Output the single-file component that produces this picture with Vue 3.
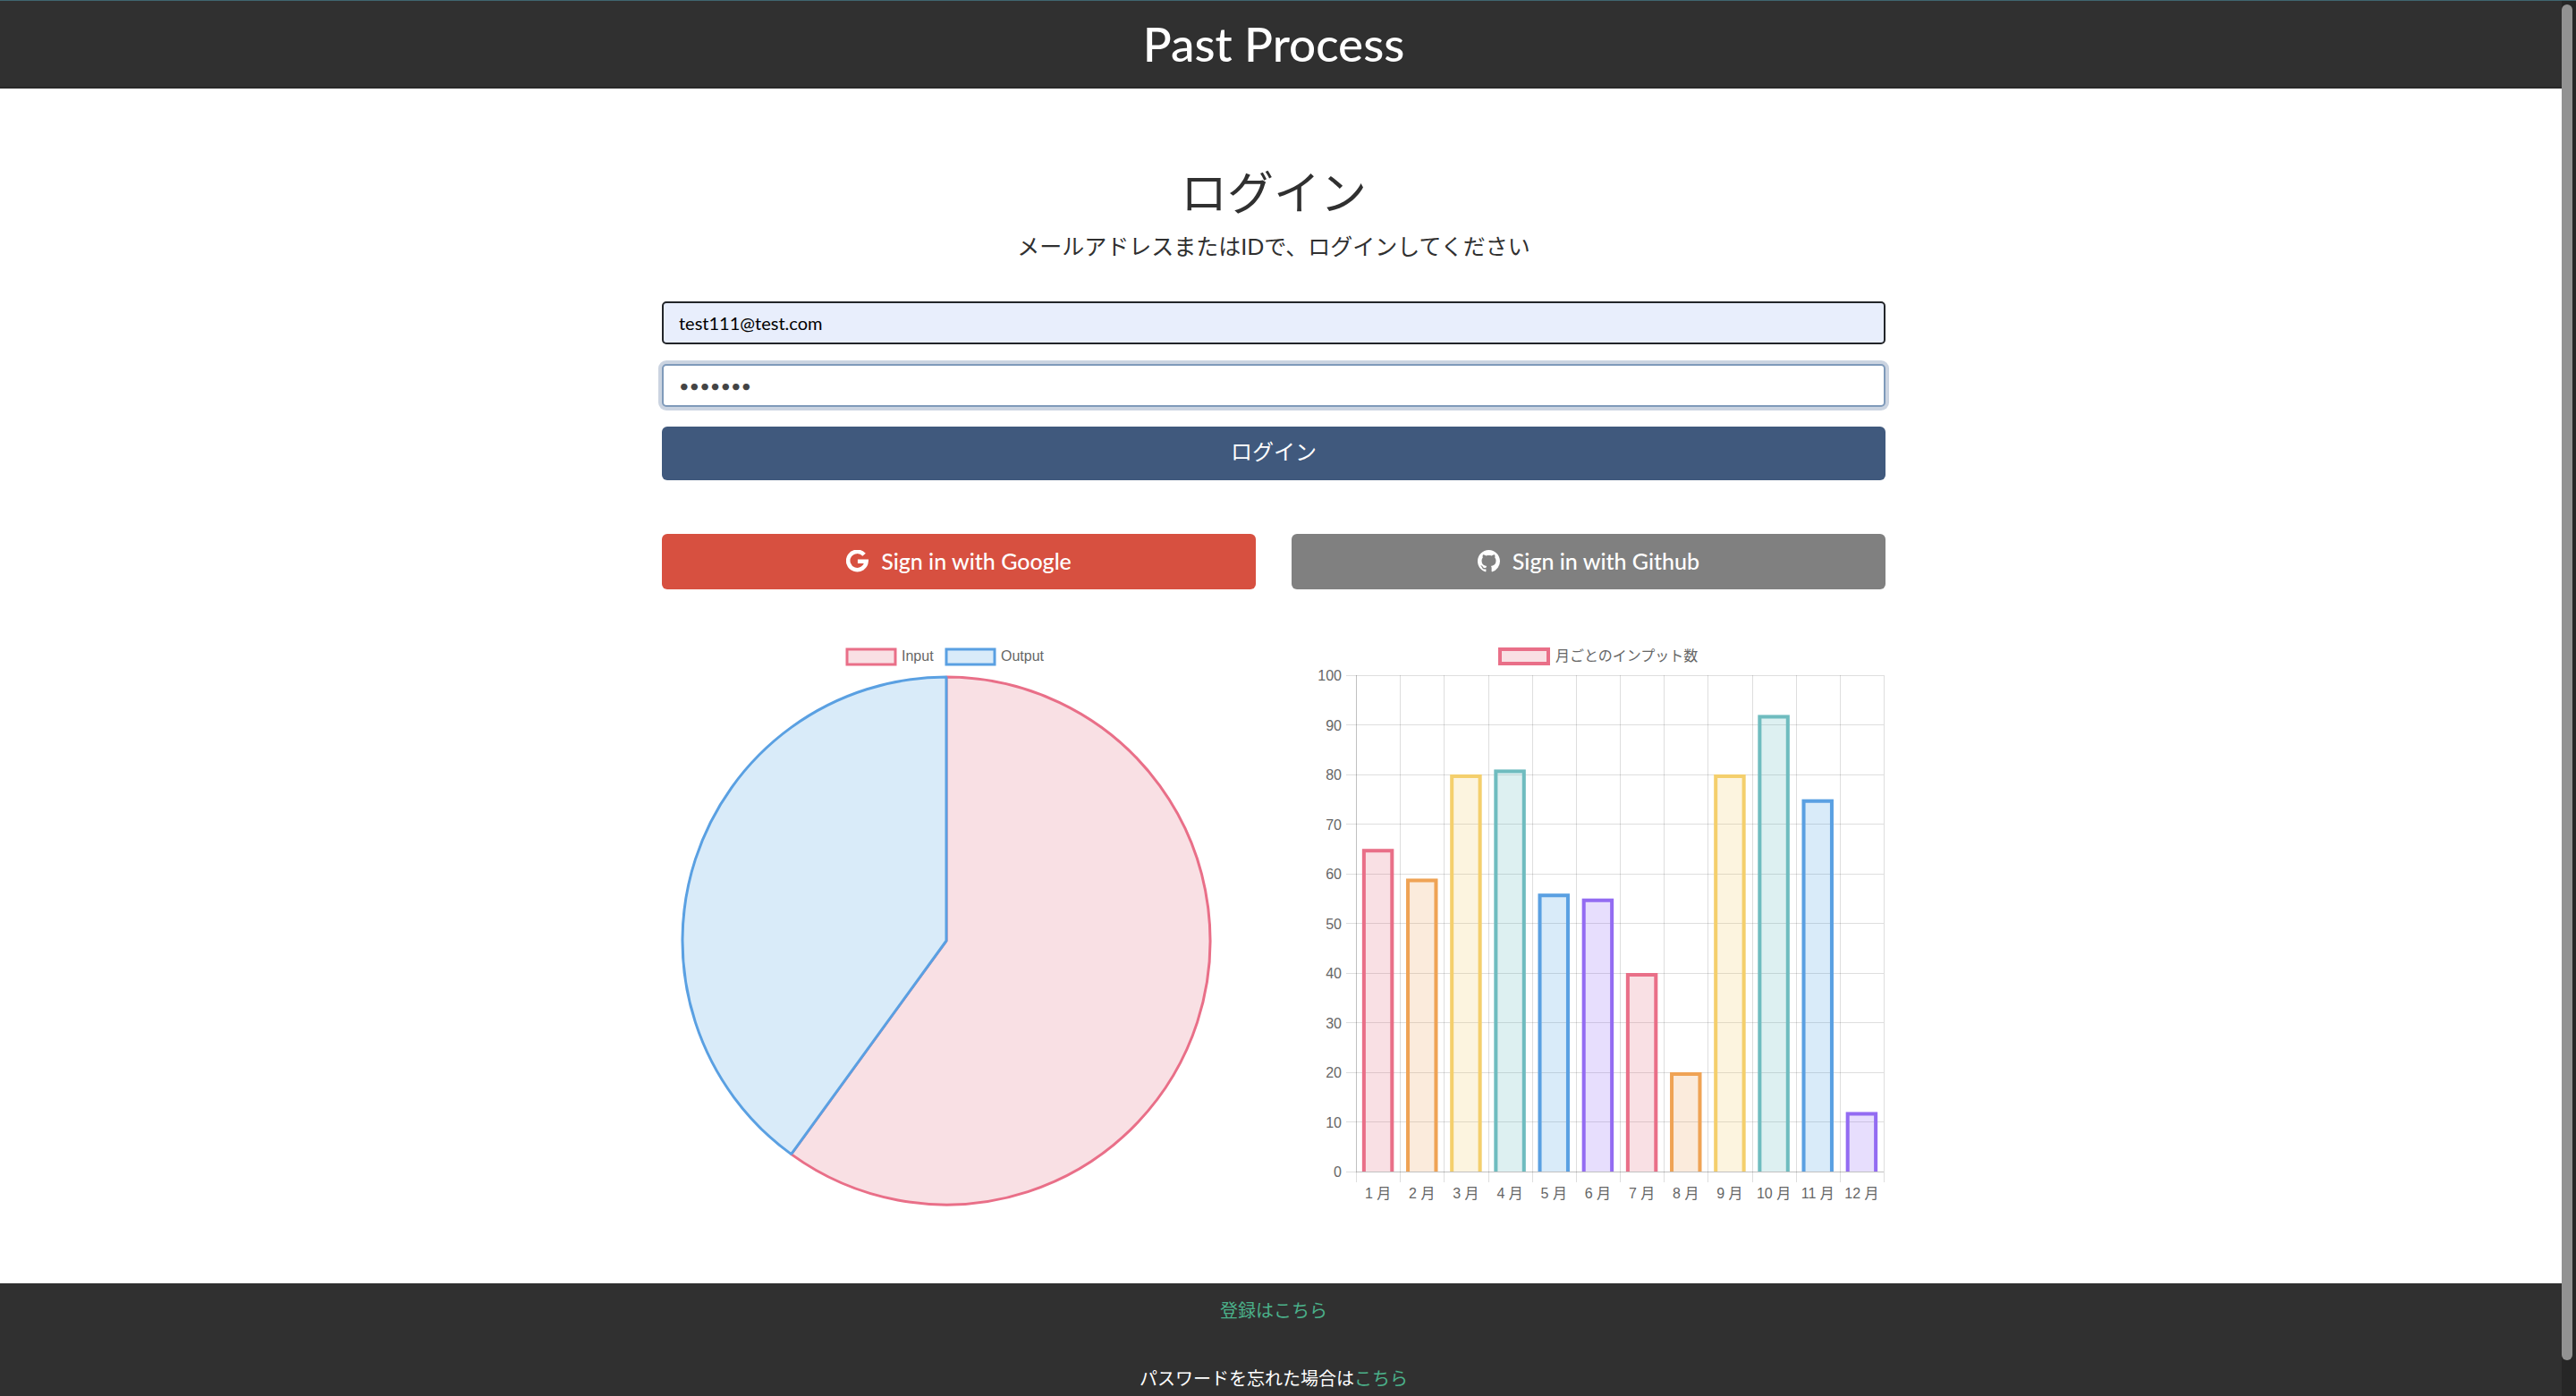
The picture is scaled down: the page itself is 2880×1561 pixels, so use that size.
<script setup>
import { ref } from 'vue'

const email = ref('test111@test.com')
const password = ref('pass111')

const palette = {
  red: '225, 100, 120',
  orange: '235, 155, 80',
  yellow: '240, 200, 95',
  teal: '85, 180, 185',
  blue: '65, 155, 225',
  purple: '135, 90, 245',
}
const strokes = {
  red: '#e96f88',
  orange: '#efa355',
  yellow: '#f4cf6c',
  teal: '#6fbcbf',
  blue: '#5aa0e2',
  purple: '#936cf2',
}
const fillOf = (name) => `rgba(${palette[name]}, 0.2)`

const monthly = [65, 59, 80, 81, 56, 55, 40, 20, 80, 92, 75, 12]
const order = ['red', 'orange', 'yellow', 'teal', 'blue', 'purple']

const plot = { left: 44, right: 634, top: 40, bottom: 595 }
const step = (plot.right - plot.left) / 12
const barWidth = step * 0.72
const yOf = (v) => plot.bottom - (v * (plot.bottom - plot.top)) / 100

const ticks = Array.from({ length: 11 }, (_, i) => ({ value: i * 10, y: yOf(i * 10) }))
const columns = Array.from({ length: 13 }, (_, i) => Math.round(plot.left + i * step))

const bars = monthly.map((value, i) => {
  const color = order[i % 6]
  const center = plot.left + step * (i + 0.5)
  const x0 = center - barWidth / 2
  const x1 = center + barWidth / 2
  const y = yOf(value)
  return {
    label: `${i + 1} 月`,
    center,
    x: x0,
    y,
    height: plot.bottom - y,
    fill: fillOf(color),
    stroke: strokes[color],
    outline: `M${x0 + 2} ${plot.bottom} V${y + 2} H${x1 - 2} V${plot.bottom}`,
  }
})

const pie = { cx: 318, cy: 337, r: 295 }
const angle = Math.PI * 2 * 0.6
const px = pie.cx + pie.r * Math.sin(angle)
const py = pie.cy - pie.r * Math.cos(angle)
const top = pie.cy - pie.r
const inputSlice = `M${pie.cx} ${pie.cy} V${top} A${pie.r} ${pie.r} 0 1 1 ${px} ${py} Z`
const outputSlice = `M${pie.cx} ${pie.cy} L${px} ${py} A${pie.r} ${pie.r} 0 0 1 ${pie.cx} ${top} Z`
</script>

<template>
  <div class="page">
    <div class="column">
      <header class="header">
        <h1 class="brand">Past Process</h1>
      </header>

      <main class="main">
        <div class="content">
          <h2 class="title">ログイン</h2>
          <p class="lead">メールアドレスまたはIDで、ログインしてください</p>

          <form class="form" @submit.prevent>
            <input v-model="email" class="field filled" type="email" aria-label="メールアドレス" />
            <input v-model="password" class="field focused" type="password" aria-label="パスワード" />
            <button class="btn login" type="submit">ログイン</button>
          </form>

          <div class="social">
            <button class="btn google" type="button">
              <svg class="icon" viewBox="0 0 24 24" aria-hidden="true">
                <path
                  fill="none"
                  stroke="currentColor"
                  stroke-width="4.4"
                  d="M19.3 5.1A9.8 9.8 0 1 0 21.7 12.2H12.4"
                />
              </svg>
              <span>Sign in with Google</span>
            </button>
            <button class="btn github" type="button">
              <svg class="icon" viewBox="0 0 16 16" aria-hidden="true">
                <path
                  fill="currentColor"
                  d="M8 0C3.58 0 0 3.58 0 8c0 3.54 2.29 6.53 5.47 7.59.4.07.55-.17.55-.38 0-.19-.01-.82-.01-1.49-2.01.37-2.53-.49-2.69-.94-.09-.23-.48-.94-.82-1.13-.28-.15-.68-.52-.01-.53.63-.01 1.08.58 1.23.82.72 1.21 1.87.87 2.33.66.07-.52.28-.87.51-1.07-1.78-.2-3.64-.89-3.64-3.95 0-.87.31-1.59.82-2.15-.08-.2-.36-1.02.08-2.12 0 0 .67-.21 2.2.82.64-.18 1.32-.27 2-.27s1.36.09 2 .27c1.53-1.04 2.2-.82 2.2-.82.44 1.1.16 1.92.08 2.12.51.56.82 1.27.82 2.15 0 3.07-1.87 3.75-3.65 3.95.29.25.54.73.54 1.48 0 1.07-.01 1.93-.01 2.2 0 .21.15.46.55.38A8.01 8.01 0 0 0 16 8c0-4.42-3.58-8-8-8z"
                />
              </svg>
              <span>Sign in with Github</span>
            </button>
          </div>

          <div class="charts">
            <svg class="chart" viewBox="0 0 636 636" role="img" aria-label="Input / Output">
              <rect x="207" y="11" width="54" height="17" :fill="fillOf('red')" :stroke="strokes.red" stroke-width="3" />
              <text x="268" y="24">Input</text>
              <rect x="318" y="11" width="54" height="17" :fill="fillOf('blue')" :stroke="strokes.blue" stroke-width="3" />
              <text x="379" y="24">Output</text>
              <g stroke-width="3" stroke-linejoin="bevel">
                <path :d="inputSlice" :fill="fillOf('red')" :stroke="strokes.red" />
                <path :d="outputSlice" fill="#d9ebf9" :stroke="strokes.blue" />
              </g>
            </svg>

            <svg class="chart" viewBox="0 0 636 636" role="img" aria-label="月ごとのインプット数">
              <rect x="205" y="11" width="54" height="16" :fill="fillOf('red')" :stroke="strokes.red" stroke-width="4" />
              <text x="267" y="24">月ごとのインプット数</text>
              <g class="grid">
                <line v-for="t in ticks" :key="t.value" x1="33" :x2="plot.right" :y1="t.y" :y2="t.y" />
                <line v-for="x in columns" :key="x" :x1="x" :x2="x" :y1="plot.top" y2="607" />
              </g>
              <g class="grid">
                <line :x1="plot.left" :x2="plot.left" :y1="plot.top" :y2="plot.bottom" />
                <line :x1="plot.left" :x2="plot.right" :y1="plot.bottom" :y2="plot.bottom" />
              </g>
              <g v-for="b in bars" :key="b.label">
                <rect :x="b.x" :y="b.y" :width="barWidth" :height="b.height" :fill="b.fill" />
                <path :d="b.outline" fill="none" :stroke="b.stroke" stroke-width="4" />
                <text :x="b.center" y="625" text-anchor="middle">{{ b.label }}</text>
              </g>
              <text v-for="t in ticks" :key="t.value" x="28" :y="t.y + 6" text-anchor="end">{{ t.value }}</text>
            </svg>
          </div>
        </div>
      </main>

      <footer class="footer">
        <p><a href="#register">登録はこちら</a></p>
        <p>パスワードを忘れた場合は<a href="#reset">こちら</a></p>
      </footer>
    </div>
    <div class="scroll-track"><div class="scroll-thumb"></div></div>
  </div>
</template>

<style>
body {
  margin: 0;
  background: #fff;
}
</style>

<style scoped>
* {
  box-sizing: border-box;
}
.page {
  display: flex;
  min-height: 100vh;
  border-top: 1px solid #3f6670;
  font-family: Lato, 'Noto Sans CJK JP', sans-serif;
  font-size: 20px;
  line-height: 30px;
  color: #303030;
}
.column {
  flex: 1;
  min-width: 0;
  display: flex;
  flex-direction: column;
}
.header {
  padding: 16px 16px 16px 0;
  border-bottom: 2px solid #292929;
  background: #303030;
  color: #fff;
  text-align: center;
}
.brand,
.title {
  margin: 0;
  line-height: 64px;
}
.brand {
  font-size: 53px;
  font-weight: 500;
}
.title {
  font-size: 52px;
  font-weight: 400;
}
.main {
  flex: 1;
  padding: 84px 16px 84px 0;
}
.content {
  max-width: 1368px;
  margin: 0 auto;
  text-align: center;
}
.lead {
  margin: 10px 0 44px;
  font-size: 25px;
  line-height: 36px;
}
.form {
  display: flex;
  flex-direction: column;
  gap: 22px;
}
.field {
  width: 100%;
  height: 48px;
  padding: 0 17px;
  border: 2px solid #222529;
  border-radius: 5px;
  outline: none;
  background: #fff;
  font: inherit;
  color: #444;
}
.filled {
  background: #e8eefc;
  color: #000;
}
.focused {
  border-color: #7f9aba;
  box-shadow: 0 0 0 4px #cbd4e1;
}
.btn {
  display: flex;
  align-items: center;
  justify-content: center;
  gap: 14px;
  border: 0;
  border-radius: 6px;
  font-family: inherit;
  font-size: 25px;
  line-height: 36px;
  color: #fff;
}
.login {
  height: 60px;
  padding: 0 0 4px;
  background: #40597d;
  font-size: 24px;
}
.social {
  display: grid;
  grid-template-columns: 1fr 1fr;
  gap: 40px;
  margin: 60px 0 56px;
}
.social .btn {
  height: 62px;
  padding: 0 0 2px;
  font-weight: 500;
}
.google {
  background: #d75040;
}
.github {
  background: #808080;
}
.icon {
  width: 25px;
  height: 25px;
}
.charts {
  display: grid;
  grid-template-columns: 1fr 1fr;
  gap: 96px;
}
.chart {
  display: block;
  width: 100%;
  font-family: 'Liberation Sans', 'Noto Sans CJK JP', sans-serif;
  font-size: 16px;
}
.chart text {
  fill: #666;
}
.grid {
  stroke: rgba(0, 0, 0, 0.13);
  stroke-width: 1px;
  shape-rendering: crispEdges;
}
.footer {
  display: flex;
  flex-direction: column;
  gap: 46px;
  padding: 15px 16px 5px 0;
  background: #303030;
  color: #fff;
  text-align: center;
}
.footer p {
  margin: 0;
}
.footer a {
  color: #4bb08a;
  text-decoration: none;
}
.scroll-track {
  display: flex;
  width: 16px;
  padding: 4px 4px 40px 0;
  background: #262626;
}
.scroll-thumb {
  flex: 1;
  border-radius: 7px;
  background: #929292;
}
</style>
